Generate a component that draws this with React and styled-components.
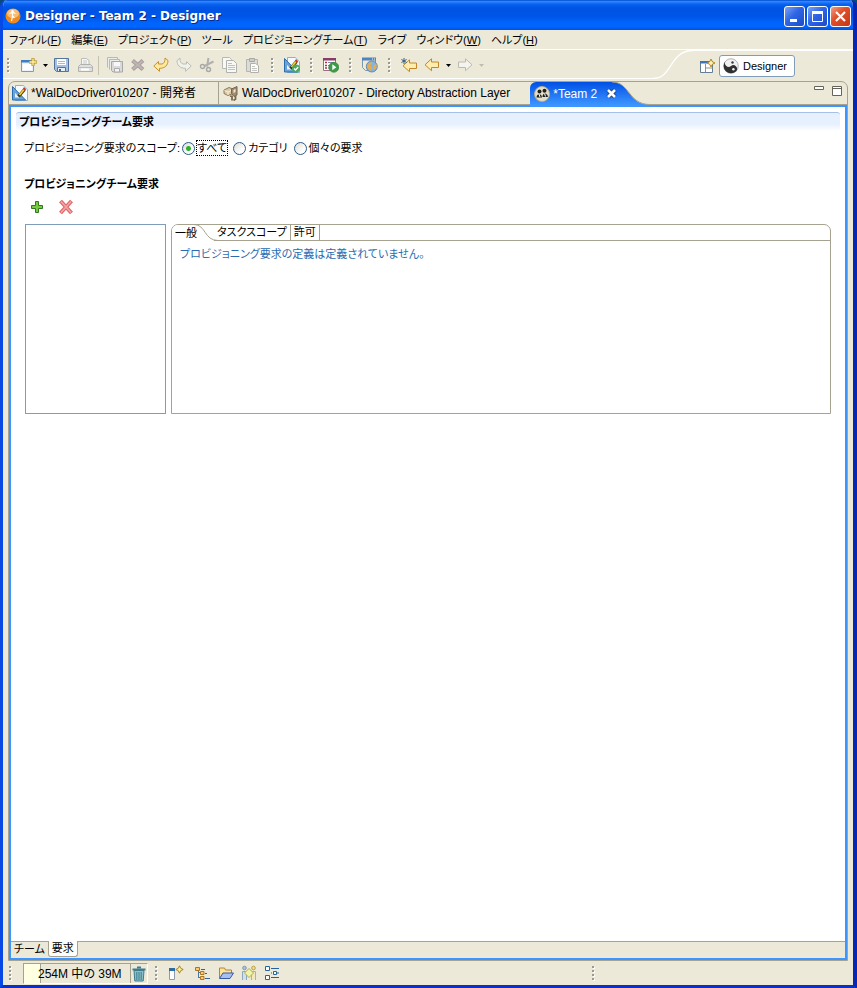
import React, { useState } from 'react';
import styled, { createGlobalStyle, css } from 'styled-components';

const GlobalStyle = createGlobalStyle`
  * {
    box-sizing: border-box;
  }
  body {
    margin: 0;
    background: #0a4a78;
    color: #000;
    font-family: 'Liberation Sans', 'Noto Sans CJK JP', sans-serif;
    font-size: 11px;
    line-height: 16px;
    font-feature-settings: 'palt';
  }
  button, input, select {
    font: inherit;
    font-feature-settings: inherit;
    color: inherit;
    margin: 0;
    padding: 0;
  }
  button {
    border: 0;
    background: none;
    white-space: nowrap;
  }
  svg {
    display: block;
    flex: none;
  }
`;

const Window = styled.div`
  display: flex;
  flex-direction: column;
  min-height: 100vh;
  border: solid;
  border-width: 0 4px 3px 3px;
  border-color: #0a3ce0 #0626b4 #0a30c8 #0848e4;
  border-radius: 7px 7px 0 0;
  background: #ece9d8;
  overflow: hidden;
`;

const TitleBar = styled.header`
  display: flex;
  align-items: center;
  height: 30px;
  margin: 0 -4px 0 -3px;
  padding: 2px 6px 0 5px;
  color: #fff;
  background: linear-gradient(
    #0048c8 0,
    #2b86ff 5%,
    #0a62f0 14%,
    #0054e3 26%,
    #0055e8 55%,
    #0064fc 75%,
    #0066ff 88%,
    #0050e0 100%
  );
  & h1 {
    flex: 1;
    margin: 0 0 0 4px;
    font-family: 'DejaVu Sans', sans-serif;
    font-size: 12px;
    font-weight: bold;
    text-shadow: 1px 1px 0 #0a2a80;
  }
`;

const WindowButton = styled.button`
  display: flex;
  align-items: center;
  justify-content: center;
  width: 21px;
  height: 21px;
  margin-left: 2px;
  border: 1px solid #fff;
  border-radius: 3px;
  background: ${(p) =>
    p.$close
      ? 'linear-gradient(135deg, #f0a088, #e0502c 40%, #c83410)'
      : 'linear-gradient(135deg, #7aa4f4, #2f64e4 45%, #1a4cc8)'};
`;

const MenuBar = styled.nav`
  display: flex;
  align-items: center;
  gap: 10px;
  height: 20px;
  padding-left: 6px;
  border-bottom: 1px solid #fff;
`;

const CoolBar = styled.div`
  display: flex;
  height: 31px;
`;

const ToolBar = styled.div`
  display: flex;
  flex: 1;
  align-items: center;
  height: 29px;
  padding-top: 2px;
  border-bottom: 1px solid #fff;
`;

const Perspectives = styled.div`
  display: flex;
  align-items: center;
  height: 31px;
  padding: 0 58px 0 7px;
  border-top: 1px solid #fff;
`;

const PerspectiveButton = styled.button`
  display: flex;
  align-items: center;
  gap: 4px;
  height: 22px;
  margin-left: 3px;
  padding: 0 7px 0 3px;
  border: 1px solid #7f9db9;
  border-radius: 3px;
  background: #fff;
`;

const ToolButton = styled.button`
  display: flex;
  align-items: center;
  justify-content: center;
  width: ${(p) => (p.$narrow ? '10px' : '23px')};
  height: 22px;
`;

const GripBox = styled.span`
  display: flex;
  flex: none;
  width: ${(p) => (p.$start ? '14px' : '16px')};
  padding-left: ${(p) => (p.$start ? '4px' : '7px')};
`;

const Separator = styled.span`
  width: 1px;
  height: 19px;
  margin: 0 4px 0 2px;
  background: #c5c2b2;
`;

const Editor = styled.main`
  display: flex;
  flex: 1;
  flex-direction: column;
  margin: 0 5px;
  border: 1px solid #a5a28f;
  border-radius: 7px 7px 0 0;
`;

const EditorTabs = styled.div`
  display: flex;
  height: 23px;
  border-bottom: 1px solid #a5a28f;
  font-size: 12px;
`;

const EditorTab = styled.button`
  position: relative;
  display: flex;
  align-items: center;
  gap: 3px;
  height: 22px;
  padding: 0 22px 0 3px;
  ${(p) =>
    p.$active
      ? css`
          height: 23px;
          padding: 0 0 0 4px;
          border-radius: 6px 0 0 0;
          color: #fff;
          background: linear-gradient(#0050e4, #3d95ff);
        `
      : css`
          border-right: 1px solid #a5a28f;
        `}
`;

const LastTab = styled(EditorTab)`
  padding-right: 20px;
  padding-left: 4px;
  border-right: 0;
`;

const TabTail = styled.svg`
  position: absolute;
  top: 0;
  left: 100%;
`;

const CloseTab = styled.span`
  position: relative;
  z-index: 1;
  margin: 0 -5px 0 6px;
`;

const PaneButtons = styled.div`
  display: flex;
  gap: 8px;
  margin-left: auto;
  padding: 4px 5px 0 0;
  align-items: flex-start;
`;

const EditorBody = styled.div`
  display: flex;
  flex: 1;
  flex-direction: column;
  border: 2px solid #3d95ff;
  background: #fff;
`;

const Page = styled.div`
  flex: 1;
  padding: 5px 5px 0 5px;
`;

const PageHeading = styled.h2`
  height: 19px;
  margin: 0;
  padding-left: 3px;
  border: solid #a4bfe8;
  border-width: 1px 0 0;
  border-radius: 3px 3px 0 0;
  background: linear-gradient(#e6f0ff 60%, #fff);
  font-size: 11px;
  line-height: 18px;
`;

const Scope = styled.fieldset`
  display: flex;
  align-items: center;
  height: 16px;
  margin: 9px 0 0;
  padding: 0 0 0 8px;
  border: 0;
  & > span {
    margin-right: 2px;
  }
`;

const RadioLabel = styled.label`
  display: flex;
  align-items: center;
  gap: 2px;
  margin-right: 6px;
  & input {
    appearance: none;
    width: 13px;
    height: 13px;
    border: 1px solid #2c5a88;
    border-radius: 50%;
    background: linear-gradient(135deg, #dcdcd4, #fff 70%);
  }
  & input:checked {
    background: radial-gradient(circle, #30b030 0 2px, transparent 3px),
      linear-gradient(135deg, #dcdcd4, #fff 70%);
  }
  & span {
    height: 14px;
    line-height: 14px;
    outline: ${(p) => (p.$checked ? '1px dotted #000' : 'none')};
  }
`;

const SubHeading = styled.h3`
  margin: 20px 0 0 8px;
  font-size: 11px;
  line-height: 16px;
`;

const ListActions = styled.div`
  display: flex;
  gap: 13px;
  height: 16px;
  margin: 7px 0 0 13px;
`;

const Panels = styled.div`
  display: grid;
  grid-template-columns: 141px 1fr;
  gap: 5px;
  height: 190px;
  margin: 9px 9px 0;
`;

const RequestList = styled.select`
  width: 100%;
  height: 100%;
  border: 1px solid #7f9db9;
  border-radius: 0;
  background: #fff;
`;

const Details = styled.section`
  border: 1px solid #a5a28f;
  border-radius: 7px 7px 0 0;
  & p {
    margin: 5px 0 0 8px;
    color: #2a6cb0;
  }
`;

const DetailTabs = styled.div`
  display: flex;
  height: 16px;
  border-bottom: 1px solid #a5a28f;
`;

const DetailTab = styled.button`
  position: relative;
  height: 15px;
  padding: 0 3px;
  border-right: 1px solid #a5a28f;
  line-height: 15px;
`;

const ActiveDetailTab = styled(DetailTab)`
  height: 16px;
  padding: 0 17px 0 3px;
  border: 0;
  border-radius: 6px 0 0 0;
  background: #fff;
  & svg {
    position: absolute;
    top: -1px;
    right: -4px;
  }
`;

const PageTabs = styled.div`
  display: flex;
  height: 17px;
  border-top: 1px solid #a5a28f;
  background: #ece9d8;
`;

const PageTab = styled.button`
  height: 15px;
  padding: 0 3px;
  line-height: 15px;
  ${(p) =>
    p.$active &&
    css`
      height: 16px;
      margin-top: -1px;
      border: solid #a5a28f;
      border-width: 0 1px 1px;
      border-radius: 0 0 3px 3px;
      background: #fff;
    `}
`;

const StatusBar = styled.footer`
  display: flex;
  align-items: center;
  height: 24px;
  padding-left: 2px;
`;

const Heap = styled.div`
  display: flex;
  height: 21px;
  margin-left: 4px;
  border: 1px solid #a5a28f;
  border-color: #a5a28f #fff #fff #a5a28f;
  & > span {
    width: 107px;
    padding-left: 14px;
    border-right: 1px solid #a5a28f;
    background: linear-gradient(90deg, #ffffe1 16px, #a5a28f 16px 17px, #ece9d8 17px);
    font-size: 12px;
    line-height: 20px;
  }
  & button {
    padding: 1px 0 0;
  }
`;

const StatusIcons = styled.div`
  display: flex;
  width: 421px;
  & button:first-child {
    margin-right: 4px;
  }
`;

const Icon = ({ children, size = 16 }) => (
  <svg width={size} height={size} viewBox="0 0 16 16" fill="none" aria-hidden="true">
    {children}
  </svg>
);

const Grip = ({ start }) => (
  <GripBox $start={start}>
    <svg width="3" height="15" shapeRendering="crispEdges" aria-hidden="true">
      {[0, 4, 8, 12].map((y) => (
        <g key={y}>
          <path d={`M1 ${y + 1}h2v2h-2z`} fill="#fff" />
          <path d={`M0 ${y}h2v2h-2z`} fill="#9c9a8c" />
        </g>
      ))}
    </svg>
  </GripBox>
);

const Caret = ({ off }) => (
  <svg width="5" height="3" aria-hidden="true">
    <path d="M0 0h5L2.5 3z" fill={off ? '#c0bdae' : '#000'} />
  </svg>
);

const AppIcon = () => (
  <Icon>
    <circle cx="8" cy="8" r="7.5" fill="#f08a1c" />
    <ellipse cx="8" cy="5.5" rx="6" ry="4.5" fill="#f9bd74" />
    <path d="M4.500 5.500l3-1 3 1M7.500 5v3l-1 5M7.500 8l2 2" stroke="#fff" strokeWidth="1.2" />
    <circle cx="7.500" cy="3.2" r="1.2" fill="#fff" />
  </Icon>
);

const NewIcon = () => (
  <Icon>
    <path d="M.5 3.500h12v11H.5z" fill="#e8f2fa" stroke="#a89868" />
    <path d="M2 7h9v6H2z" fill="#fff" />
    <path d="M0 3h10v2.500H0z" fill="#3f7ec0" />
    <path d="M12 1v8M8 5h8" stroke="#b08820" strokeWidth="3" />
    <path d="M12 1.500v7M8.500 5h7" stroke="#fff0a0" strokeWidth="1.400" />
  </Icon>
);

const SaveIcon = () => (
  <Icon>
    <path d="M.5 1.500h14v13H2.500l-2-2z" fill="#a8c0e0" stroke="#54749c" />
    <path d="M3 2h9v6H3z" fill="#fff" />
    <path d="M4 4.500h7M4 6.500h7" stroke="#a8bcd4" />
    <path d="M3.500 10.500h8v4h-8z" fill="#e8f0f8" stroke="#54749c" />
    <path d="M5 12h2v2H5z" fill="#486890" />
  </Icon>
);

const PrintIcon = () => (
  <Icon>
    <path d="M4.500 7.500v-6h5l2.500 2v4z" fill="#f6f6f4" stroke="#bcbcba" />
    <path d="M6 4h4M6 6h4" stroke="#c8c8c6" />
    <path d="M1.500 9.500l2-2h10l2 2v5h-14z" fill="#e0e0de" stroke="#b0b0ae" />
    <path d="M2 10.500h13" stroke="#bcbcba" />
    <path d="M4 12.500h8" stroke="#fff" strokeWidth="2" />
  </Icon>
);

const SaveAllIcon = () => (
  <Icon>
    <path d="M.5 10.500v-10h10v2M2.500 12.500v-10h10v2" stroke="#b8b8b8" fill="#ecece8" />
    <path d="M4.500 4.500h11v10.500h-9.500l-1.500-1.500z" fill="#dadada" stroke="#a8a8a8" />
    <path d="M7 5h6v4H7z" fill="#f8f8f8" />
    <path d="M7.500 11.500h5v3.500h-5z" fill="#f4f4f4" stroke="#acacac" />
  </Icon>
);

const DeleteIcon = () => (
  <Icon>
    <path d="M2.500 3.500l10.500 9M13 3.500l-10.500 9" stroke="#aaa0a0" strokeWidth="4.200" />
    <path d="M3 4l9.500 8M12.500 4l-9.500 8" stroke="#beb4b4" strokeWidth="2" />
  </Icon>
);

const TurnArrow = ({ off }) => (
  <Icon>
    <path
      transform={off ? 'matrix(-1 0 0 1 16 0)' : undefined}
      d="M5.500 4.500L.8 9l5.700 5.300v-3c5.500 0 8.500-3 8.500-7.800l-3-2.500c.3 3.500-1 5.500-3 6L5.500 7z"
      fill={off ? '#f2f2ec' : '#ffe9a0'}
      stroke={off ? '#bcbcb8' : '#c8902c'}
      strokeLinejoin="round"
    />
  </Icon>
);

const CutIcon = () => (
  <Icon>
    <path d="M9.500 1L8 9.500M14.500 4.500L5.500 9" stroke="#b0b0ac" strokeWidth="2" />
    <circle cx="9.500" cy="12.500" r="2" stroke="#a8a8a4" strokeWidth="1.400" />
    <circle cx="3.500" cy="9.500" r="2" stroke="#a8a8a4" strokeWidth="1.400" />
  </Icon>
);

const CopyIcon = () => (
  <Icon>
    <path d="M.5 .5h7l2 2v9h-9z" fill="#f8f8f4" stroke="#b8b8b4" />
    <path d="M4.500 3.500h7l3 3v9h-10z" fill="#f8f8f4" stroke="#b0b0ac" />
    <path d="M6 6.500h4M6 8.500h7M6 10.500h7M6 12.500h7" stroke="#c0c0bc" />
  </Icon>
);

const PasteIcon = () => (
  <Icon>
    <path d="M1.500 2.500h11v12h-11z" fill="#dcdcd6" stroke="#b4b4b0" />
    <path d="M4.500 1.500h5v3h-5z" fill="#ccccc8" stroke="#a8a8a4" />
    <path d="M5.500 6.500h5l3 2v7h-8z" fill="#fbfbf8" stroke="#b0b0ac" />
    <path d="M7 9.500h3M7 11.500h5M7 13.500h5" stroke="#c4c4c0" />
  </Icon>
);

const DesignIcon = ({ check }) => (
  <Icon>
    <path d="M3.500 .5h8l4 4v11h-12z" fill="#f6fafe" stroke="#8cb0d0" />
    <path d="M11.500 .5v4h4z" fill="#c4dcf0" />
    <path d="M.5 1.500v13.500h13z" fill="#68a4d8" stroke="#2c6cac" />
    <path d="M3 8v4.500h4.500z" fill="#e8f4fc" />
    <path d="M12.500 4.500L6.500 11.500" stroke="#403410" strokeWidth="3" />
    <path d="M12 4.500L7.500 10" stroke="#f8d030" strokeWidth="1.800" />
    <path d="M11.500 3l2 2" stroke="#d03828" strokeWidth="2" />
    {check && (
      <>
        <circle cx="12" cy="11.500" r="4" fill="#4ca860" />
        <path d="M10 11.500l1.500 1.500L14.200 10" stroke="#fff" strokeWidth="1.300" />
      </>
    )}
  </Icon>
);

const RunIcon = () => (
  <Icon>
    <path d="M.5 1.500h12v12H.5z" fill="#fff" stroke="#a06c8c" />
    <path d="M0 1h13v2.500H0z" fill="#883c68" />
    <path d="M2 5.500h2M2 8.500h2M2 11h2" stroke="#b03040" strokeWidth="1.500" />
    <path d="M5 5.500h6M5 8.500h3M5 11h2" stroke="#7888a0" />
    <circle cx="10.800" cy="10.300" r="5" fill="#3c9c48" stroke="#2c7c3c" strokeWidth=".6" />
    <path d="M9.300 7.300l4 3-4 3z" fill="#fff" />
  </Icon>
);

const GlobeIcon = () => (
  <Icon>
    <path d="M.5 1.500h13v12H3.500l-3-3z" fill="#f2ead0" stroke="#7c94ac" />
    <path d="M0 .5h14v3H0z" fill="#4c84c0" />
    <path d="M10 2h1M12 2h1" stroke="#fff" />
    <circle cx="9.800" cy="9.500" r="5.500" fill="#84b4e0" stroke="#4c7cac" strokeWidth=".8" />
    <path d="M5 9l2-3 3.500-1.500L9.500 7 8 8.500l2 2-1 3.500-2.500-2zM12 8l2.500-1v4l-2.500 2-1-2z" fill="#e8ac50" />
  </Icon>
);

const ArrowIcon = ({ off, right, star }) => (
  <Icon>
    <path
      transform={right ? 'matrix(-1 0 0 1 16 0)' : star ? 'translate(1 1)' : undefined}
      d="M7.500 1.800v3.200h7v5.500h-7v3.200L1 7.800z"
      fill={off ? '#f4f3ee' : '#ffedb0'}
      stroke={off ? '#bcbab0' : '#c08828'}
      strokeLinejoin="round"
    />
    {star && <path d="M3 1v6M.4 2.500l5.200 3M5.600 2.500l-5.200 3" stroke="#345c80" />}
  </Icon>
);

const OpenPerspectiveIcon = () => (
  <Icon>
    <path d="M.5 3.500h12v11H.5z" fill="#fff" stroke="#647c94" />
    <path d="M0 3h9v2.500H0z" fill="#3c74b4" />
    <path d="M5.500 6v8.500M6 10h6.500" stroke="#8c9484" />
    <path d="M11 1l1.300 2.700L15 5l-2.700 1.300L11 9 9.700 6.300 7 5l2.700-1.300z" fill="#fff4b0" stroke="#b08820" />
  </Icon>
);

const YinYangIcon = () => (
  <Icon>
    <circle cx="8" cy="8" r="7.300" fill="#f0f0f0" stroke="#848484" strokeWidth=".6" />
    <path d="M2.800 2.800A7.300 7.300 0 0 0 13.200 13.200A3.700 3.700 0 0 0 8 8A3.700 3.700 0 0 1 2.800 2.800z" fill="#303030" />
    <circle cx="9.500" cy="4.500" r="1.200" fill="#383838" />
    <circle cx="10.400" cy="11.300" r="1.200" fill="#f4f4f4" />
  </Icon>
);

const DirectoryIcon = () => (
  <Icon>
    <path d="M1 5l5-2.500 4 1.500v4.500L5 10.500 1 8.500z" fill="#d8c8a4" stroke="#8c7858" />
    <path d="M1.500 5.500L5 7l5-2.500M5 7v3" stroke="#f8f0dc" />
    <path d="M8.500 4l5.500-2.500V10l-3 1.500-2.500-3z" fill="#a08c70" stroke="#786450" />
    <path d="M10.500 5l2-1v3l-2 1z" fill="#f0e4cc" />
    <path d="M7 11l2 .5v4M12.500 11v3l-2 1.500" stroke="#7c684c" strokeWidth="1.800" />
  </Icon>
);

const TeamIcon = () => (
  <Icon>
    <circle cx="8" cy="8" r="7.500" fill="#e4dfc8" stroke="#b4ac90" />
    <circle cx="5.500" cy="5.500" r="2" fill="#20201c" />
    <circle cx="10.500" cy="4.800" r="2" fill="#20201c" />
    <path d="M2.500 11.500c0-4.500 5.500-4.500 5.500 0zM8.500 11c0-5 5-4.500 5.500 0z" fill="#20201c" />
    <path d="M5 8l1 3M10.500 7.500l1 3" stroke="#fff" />
  </Icon>
);

const ClosePaint = () => (
  <svg width="11" height="11" viewBox="0 0 11 11" aria-hidden="true">
    <path d="M2 2l7 7M9 2l-7 7" stroke="#20407c" strokeWidth="4.500" />
    <path d="M2 2l7 7M9 2l-7 7" stroke="#fff" strokeWidth="2.600" />
  </svg>
);

const AddIcon = () => (
  <Icon>
    <path d="M6.500 2.500h3v4h4v3h-4v4h-3v-4h-4v-3h4z" fill="#78c840" stroke="#2f7820" />
  </Icon>
);

const RemoveIcon = () => (
  <Icon>
    <path d="M2.500 2l11 12M13.500 2l-11 12" stroke="#e06468" strokeWidth="4" />
    <path d="M3 2.500l10 11M13 2.500l-10 11" stroke="#f0a4a4" strokeWidth="1.800" />
  </Icon>
);

const TrashIcon = () => (
  <Icon>
    <path d="M3 4.500l.8 10.500h8.400l.8-10.500z" fill="#8cc0c8" stroke="#3c7c8c" />
    <path d="M1.500 3.500h13" stroke="#3c7c8c" strokeWidth="2" />
    <path d="M6 1.500h4" stroke="#3c7c8c" strokeWidth="2" />
    <path d="M5.800 6v8M8 6v8M10.200 6v8" stroke="#3c7c8c" />
  </Icon>
);

const FastViewIcon = () => (
  <Icon>
    <path d="M1.500 4.500h5v10h-5z" fill="#fff" stroke="#8c9cac" />
    <path d="M1 3h6v3H1z" fill="#2c6ca0" />
    <path d="M11.500 .8l1.200 2.500 2.500 1.200-2.500 1.200-1.200 2.500-1.200-2.500-2.500-1.200 2.500-1.200z" fill="#fff0a0" stroke="#a88420" />
  </Icon>
);

const OutlineIcon = () => (
  <Icon>
    <path d="M3.500 5v8M3.500 7.500h3M3.500 12.500h4" stroke="#4878a8" />
    <path d="M.5 2.500h4v3h-4zM5.500 6.500h3.500v3h-3.500zM5.500 11.500h3.500v3h-3.500z" fill="#f8cc70" stroke="#b07420" />
    <path d="M6 4.500h4M10 8.500h2M10 13.500h5" stroke="#2c64a4" />
  </Icon>
);

const FolderIcon = () => (
  <Icon>
    <path d="M1.500 13v-10h5l1 2h6v3" fill="#fce4a0" stroke="#b8842c" />
    <path d="M1.500 13.500l3.500-5.500h10.500l-3.500 5.500z" fill="#a8c0f0" stroke="#3858a8" />
  </Icon>
);

const PeopleIcon = () => (
  <Icon>
    <circle cx="3.500" cy="3" r="1.800" fill="#a8c4dc" stroke="#7c9cb8" />
    <circle cx="12.500" cy="3" r="1.800" fill="#f4dc8c" stroke="#b8a04c" />
    <path d="M1.500 15V6.500h4v8.500" stroke="#8ca8c0" fill="#d4e0e8" />
    <path d="M10.500 15V6.500h4v8.500" stroke="#c4b070" fill="#f0e8c0" />
    <path d="M8 3.500l4.500 4.500-4.500 4.500-4.500-4.500z" fill="#eef4a8" stroke="#b8ac50" />
  </Icon>
);

const TreeIcon = () => (
  <Icon>
    <path d="M1.500 1.500h4v4h-4zM1.500 10.500h4v4h-4z" fill="#fff" stroke="#2464a0" />
    <path d="M9.500 6.500h3v3h-3z" fill="#fff" stroke="#2464a0" />
    <path d="M7 3.500h8M7 12.500h8M7 8h1M13 8h2" stroke="#2464a0" />
  </Icon>
);

const menus = [
  ['ファイル', 'F'],
  ['編集', 'E'],
  ['プロジェクト', 'P'],
  ['ツール'],
  ['プロビジョニングチーム', 'T'],
  ['ライブ'],
  ['ウィンドウ', 'W'],
  ['ヘルプ', 'H'],
];

const scopes = ['すべて', 'カテゴリ', '個々の要求'];

const Tool = ({ label, children, ...rest }) => (
  <ToolButton aria-label={label} {...rest}>
    {children}
  </ToolButton>
);

export default function App() {
  const [scope, setScope] = useState(scopes[0]);

  return (
    <>
      <GlobalStyle />
      <Window>
        <TitleBar>
          <AppIcon />
          <h1>Designer - Team 2 - Designer</h1>
          <WindowButton aria-label="Minimize">
            <svg width="13" height="13">
              <path d="M2 9h7v3H2z" fill="#fff" />
            </svg>
          </WindowButton>
          <WindowButton aria-label="Maximize">
            <svg width="13" height="13">
              <path d="M1.500 1.500h10v10h-10z" fill="none" stroke="#fff" />
              <path d="M1 1h11v3H1z" fill="#fff" />
            </svg>
          </WindowButton>
          <WindowButton $close aria-label="Close">
            <svg width="13" height="13">
              <path d="M2 2l9 9M11 2l-9 9" stroke="#fff" strokeWidth="2.200" />
            </svg>
          </WindowButton>
        </TitleBar>
        <MenuBar>
          {menus.map(([name, key]) => (
            <button key={name}>
              {name}
              {key && (
                <>
                  (<u>{key}</u>)
                </>
              )}
            </button>
          ))}
        </MenuBar>
        <CoolBar>
          <ToolBar>
            <Grip start />
            <Tool label="New"><NewIcon /></Tool>
            <Tool label="New menu" $narrow><Caret /></Tool>
            <Tool label="Save"><SaveIcon /></Tool>
            <Tool label="Print"><PrintIcon /></Tool>
            <Separator />
            <Tool label="Save all"><SaveAllIcon /></Tool>
            <Tool label="Delete"><DeleteIcon /></Tool>
            <Tool label="Undo"><TurnArrow /></Tool>
            <Tool label="Redo"><TurnArrow off /></Tool>
            <Tool label="Cut"><CutIcon /></Tool>
            <Tool label="Copy"><CopyIcon /></Tool>
            <Tool label="Paste"><PasteIcon /></Tool>
            <Grip />
            <Tool label="Validate"><DesignIcon check /></Tool>
            <Grip />
            <Tool label="Run"><RunIcon /></Tool>
            <Grip />
            <Tool label="Browser"><GlobeIcon /></Tool>
            <Grip />
            <Tool label="Last edit"><ArrowIcon star /></Tool>
            <Tool label="Back"><ArrowIcon /></Tool>
            <Tool label="Back menu" $narrow><Caret /></Tool>
            <Tool label="Forward"><ArrowIcon right off /></Tool>
            <Tool label="Forward menu" $narrow><Caret off /></Tool>
          </ToolBar>
          <svg width="40" height="29" viewBox="0 0 40 29" fill="none" aria-hidden="true">
            <path d="M0 28.500C20 28.500 16 .5 40 .5" stroke="#fff" strokeWidth="1.400" />
          </svg>
          <Perspectives>
            <button aria-label="Open perspective"><OpenPerspectiveIcon /></button>
            <PerspectiveButton>
              <YinYangIcon />
              Designer
            </PerspectiveButton>
          </Perspectives>
        </CoolBar>
        <Editor>
          <EditorTabs>
            <EditorTab>
              <DesignIcon />
              *WalDocDriver010207 - 開発者
            </EditorTab>
            <LastTab>
              <DirectoryIcon />
              WalDocDriver010207 - Directory Abstraction Layer
            </LastTab>
            <EditorTab $active>
              <TeamIcon />
              *Team 2
              <CloseTab><ClosePaint /></CloseTab>
              <TabTail width="38" height="23" viewBox="0 0 38 23" aria-hidden="true">
                <defs>
                  <linearGradient id="tail" x2="0" y2="1">
                    <stop stopColor="#0050e4" />
                    <stop offset="1" stopColor="#3d95ff" />
                  </linearGradient>
                </defs>
                <path d="M0 0C18 0 16 22.500 37 22.500V23H0z" fill="url(#tail)" />
                <path d="M0 0C18 0 16 22.500 38 22.500" fill="none" stroke="#a5a28f" />
              </TabTail>
            </EditorTab>
            <PaneButtons>
              <button aria-label="Minimize editor">
                <svg width="10" height="10">
                  <path d="M.5 .5h9v3h-9z" fill="#fff" stroke="#66645a" />
                </svg>
              </button>
              <button aria-label="Maximize editor">
                <svg width="10" height="12">
                  <path d="M.5 .5h9v9h-9zM1 2.500h8" fill="#fff" stroke="#66645a" />
                </svg>
              </button>
            </PaneButtons>
          </EditorTabs>
          <EditorBody>
            <Page>
              <PageHeading>プロビジョニングチーム要求</PageHeading>
              <Scope>
                <span>プロビジョニング要求のスコープ:</span>
                {scopes.map((s) => (
                  <RadioLabel key={s} $checked={s === scope}>
                    <input
                      type="radio"
                      name="scope"
                      checked={s === scope}
                      onChange={() => setScope(s)}
                    />
                    <span>{s}</span>
                  </RadioLabel>
                ))}
              </Scope>
              <SubHeading>プロビジョニングチーム要求</SubHeading>
              <ListActions>
                <button aria-label="Add"><AddIcon /></button>
                <button aria-label="Remove"><RemoveIcon /></button>
              </ListActions>
              <Panels>
                <RequestList size="8" aria-label="Requests" />
                <Details>
                  <DetailTabs>
                    <ActiveDetailTab>
                      一般
                      <svg width="24" height="17" viewBox="0 0 24 17" fill="none" aria-hidden="true">
                        <path d="M0 .5C12 .5 10 16.500 24 16.500" stroke="#a5a28f" />
                      </svg>
                    </ActiveDetailTab>
                    <DetailTab>タスクスコープ</DetailTab>
                    <DetailTab>許可</DetailTab>
                  </DetailTabs>
                  <p>プロビジョニング要求の定義は定義されていません。</p>
                </Details>
              </Panels>
            </Page>
            <PageTabs>
              <PageTab>チーム</PageTab>
              <PageTab $active>要求</PageTab>
            </PageTabs>
          </EditorBody>
        </Editor>
        <StatusBar>
          <Grip start />
          <Heap>
            <span>254M 中の 39M</span>
            <button aria-label="Collect garbage"><TrashIcon /></button>
          </Heap>
          <Grip />
          <StatusIcons>
            <Tool label="Fast view"><FastViewIcon /></Tool>
            <Tool label="Outline"><OutlineIcon /></Tool>
            <Tool label="Navigator"><FolderIcon /></Tool>
            <Tool label="Users"><PeopleIcon /></Tool>
            <Tool label="Tree"><TreeIcon /></Tool>
          </StatusIcons>
          <Grip />
        </StatusBar>
      </Window>
    </>
  );
}
